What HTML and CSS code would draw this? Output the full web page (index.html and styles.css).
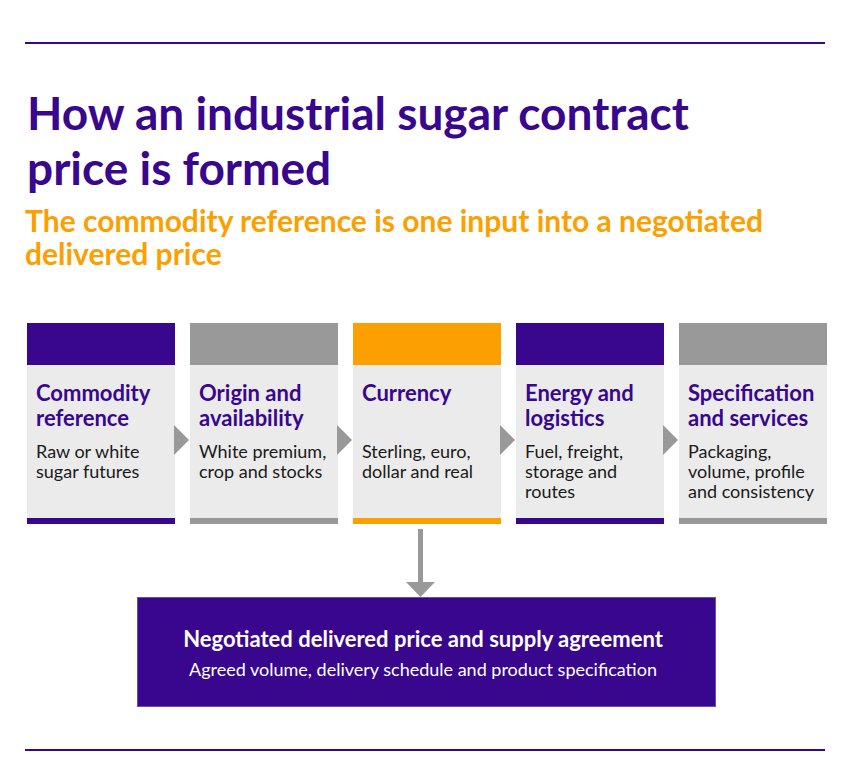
FILE: index.html
```html
<!DOCTYPE html>
<html lang="en">
<head>
<meta charset="utf-8">
<title>How an industrial sugar contract price is formed</title>
<link rel="stylesheet" href="styles.css">
</head>
<body>
<div class="page">
  <div class="rule"></div>
  <h1 class="title">How an industrial sugar contract<br>price is formed</h1>
  <p class="subtitle">The commodity reference is one input into a negotiated<br>delivered price</p>

  <div class="steps">
    <div class="step purple">
      <div class="step-top"></div>
      <div class="step-body">
        <h2 class="step-title">Commodity<br>reference</h2>
        <p class="step-text">Raw or white<br>sugar futures</p>
      </div>
      <div class="step-bottom"></div>
    </div>
    <div class="sep"><svg width="15" height="30" viewBox="0 0 15 30"><polygon points="0,0 15,15 0,30" fill="#999999"/></svg></div>
    <div class="step grey">
      <div class="step-top"></div>
      <div class="step-body">
        <h2 class="step-title">Origin and<br>availability</h2>
        <p class="step-text">White premium,<br>crop and stocks</p>
      </div>
      <div class="step-bottom"></div>
    </div>
    <div class="sep"><svg width="15" height="30" viewBox="0 0 15 30"><polygon points="0,0 15,15 0,30" fill="#999999"/></svg></div>
    <div class="step orange">
      <div class="step-top"></div>
      <div class="step-body">
        <h2 class="step-title">Currency</h2>
        <p class="step-text">Sterling, euro,<br>dollar and real</p>
      </div>
      <div class="step-bottom"></div>
    </div>
    <div class="sep"><svg width="15" height="30" viewBox="0 0 15 30"><polygon points="0,0 15,15 0,30" fill="#999999"/></svg></div>
    <div class="step purple">
      <div class="step-top"></div>
      <div class="step-body">
        <h2 class="step-title">Energy and<br>logistics</h2>
        <p class="step-text">Fuel, freight,<br>storage and<br>routes</p>
      </div>
      <div class="step-bottom"></div>
    </div>
    <div class="sep"><svg width="15" height="30" viewBox="0 0 15 30"><polygon points="0,0 15,15 0,30" fill="#999999"/></svg></div>
    <div class="step grey">
      <div class="step-top"></div>
      <div class="step-body">
        <h2 class="step-title">Specification<br>and services</h2>
        <p class="step-text">Packaging,<br>volume, profile<br>and consistency</p>
      </div>
      <div class="step-bottom"></div>
    </div>
  </div>

  <div class="down">
    <svg class="down-arrow" width="30" height="73" viewBox="0 0 30 73"><rect x="12" y="5" width="5" height="54" fill="#999999"/><polygon points="0,58 29,58 14.5,73" fill="#999999"/></svg>
  </div>

  <div class="result">
    <h3 class="result-title">Negotiated delivered price and supply agreement</h3>
    <p class="result-text">Agreed volume, delivery schedule and product specification</p>
  </div>

  <div class="rule bottom"></div>
</div>
</body>
</html>
```

FILE: styles.css
```css
html, body {
  margin: 0;
  padding: 0;
  background: #ffffff;
}

body {
  font-family: "Lato", "Liberation Sans", sans-serif;
}

.page {
  width: 800px;
  margin-left: 25px;
  padding-top: 42px;
}

.rule {
  height: 2px;
  background: #38078e;
}

.rule.bottom {
  margin-top: 42px;
}

.title {
  margin: 41px 0 0 2px;
  font-size: 46px;
  line-height: 55px;
  font-weight: 700;
  color: #38078e;
}

.subtitle {
  margin: 9px 0 0 0;
  font-size: 30px;
  line-height: 33px;
  font-weight: 700;
  color: #fba000;
}

.steps {
  display: flex;
  margin: 53px 0 0 2px;
  width: 800px;
}

.step {
  width: 148px;
  display: flex;
  flex-direction: column;
}

.step-top {
  height: 42px;
}

.step-bottom {
  height: 6px;
}

.step.purple .step-top,
.step.purple .step-bottom { background: #38078e; }

.step.grey .step-top,
.step.grey .step-bottom { background: #999999; }

.step.orange .step-top,
.step.orange .step-bottom { background: #fba000; }

.step-body {
  height: 153px;
  box-sizing: border-box;
  padding: 15px 4px 0 9px;
  background: #ebebeb;
}

.step-title {
  margin: 0;
  min-height: 50px;
  font-size: 22px;
  line-height: 25px;
  font-weight: 700;
  color: #38078e;
}

.step-text {
  margin: 11px 0 0 0;
  font-size: 18px;
  line-height: 20px;
  font-weight: 400;
  color: #1a1a1a;
}

.sep {
  width: 15px;
  padding-top: 102px;
  display: flex;
  justify-content: flex-start;
  margin-left: -1px;
  margin-right: 1px;
}

.sep svg {
  display: block;
}

.down {
  display: flex;
  justify-content: center;
  padding-left: 2px;
}

.down-arrow {
  display: block;
  margin-right: 11px;
}

.result {
  width: 579px;
  box-sizing: border-box;
  margin: 0 auto 0 112px;
  padding: 28px 13px 0 6px;
  height: 110px;
  background: #38078e;
  border: 1px solid #6a4db3;
  text-align: center;
  color: #ffffff;
}

.result-title {
  margin: 0;
  font-size: 22px;
  line-height: 25px;
  font-weight: 700;
}

.result-text {
  margin: 8px 0 0 0;
  font-size: 18px;
  line-height: 20px;
  font-weight: 400;
}
```
